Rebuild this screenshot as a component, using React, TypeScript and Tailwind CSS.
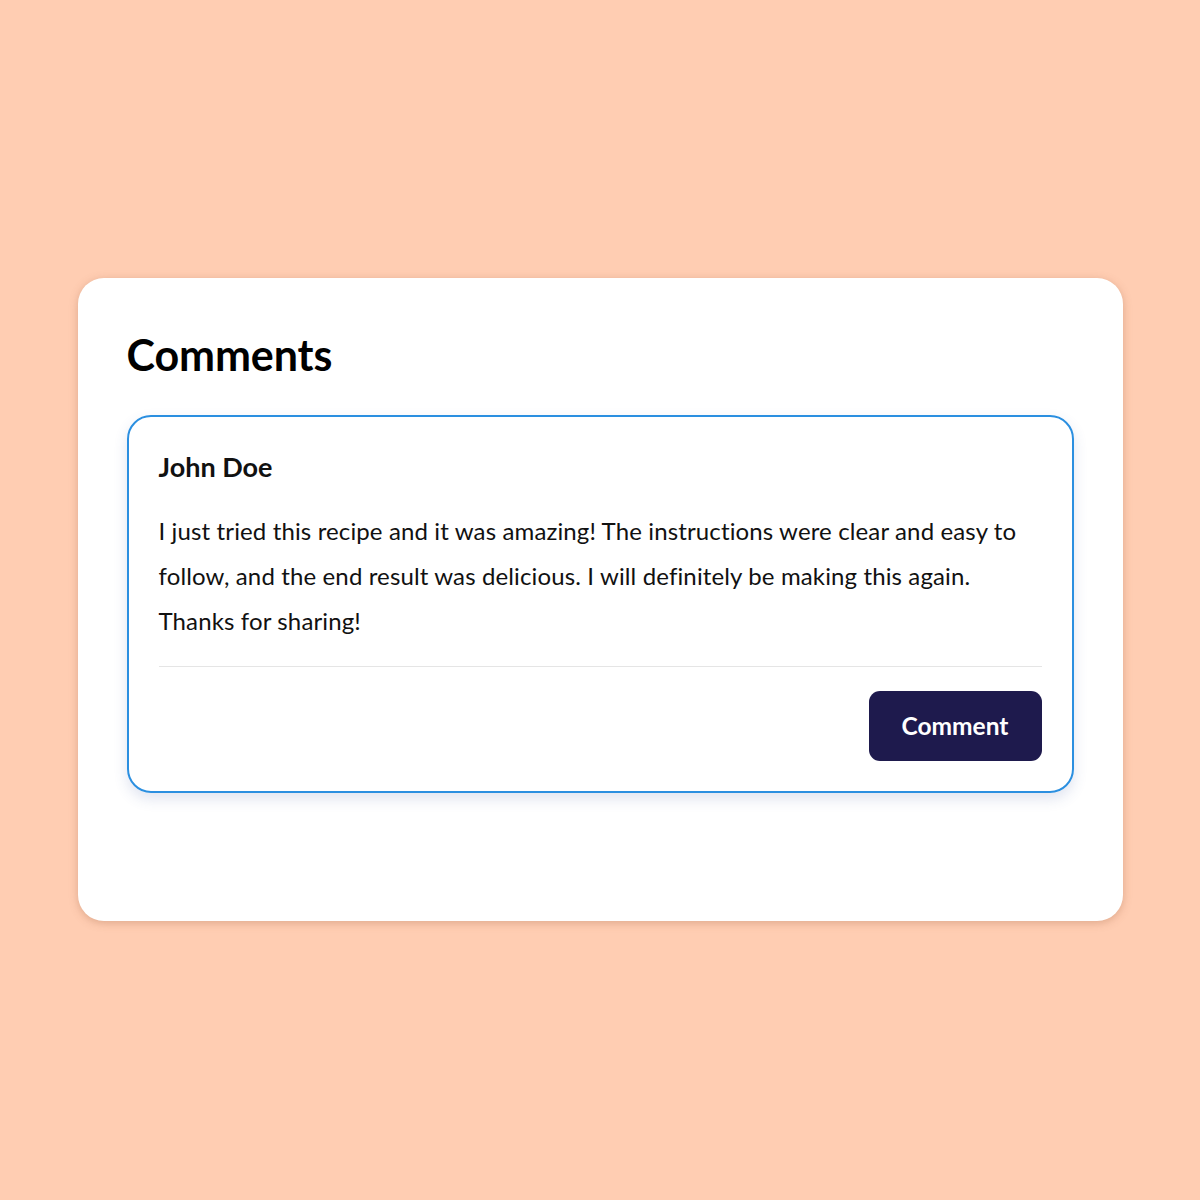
export default function App() {
  return (
    <div className="w-[1200px] h-[1200px] bg-[#ffcdb2] flex items-start justify-center pt-[278px]" style={{ fontFamily: "Lato, 'Noto Sans', sans-serif" }}>
      <div className="w-[1045px] h-[643px] bg-white rounded-[26px] shadow-[0_2px_8px_rgba(160,100,70,0.35)] px-[49px] pt-[50px]">
        <h1 className="text-[43px] leading-[54px] font-bold text-black tracking-[-0.1px]">Comments</h1>
        <div className="mt-[33px] border-2 border-[#2b8fe0] rounded-[24px] shadow-[0_6px_14px_rgba(60,90,160,0.16)] px-[30px] pt-[33px] pb-[30px]">
          <div className="text-[27px] leading-[34px] font-bold text-[#111]">John Doe</div>
          <p className="mt-[24px] text-[24px] leading-[45px] text-[#111] tracking-[0.13px]">
            I just tried this recipe and it was amazing! The instructions were clear and easy to follow, and the end result was delicious. I will definitely be making this again. Thanks for sharing!
          </p>
          <div className="mt-[23px] h-px bg-[#e5e5e5]" />
          <div className="flex justify-end mt-[24px]">
            <button className="w-[173px] h-[70px] rounded-[11px] bg-[#1e1a4d] text-white text-[24.5px] font-bold">Comment</button>
          </div>
        </div>
      </div>
    </div>
  );
}
